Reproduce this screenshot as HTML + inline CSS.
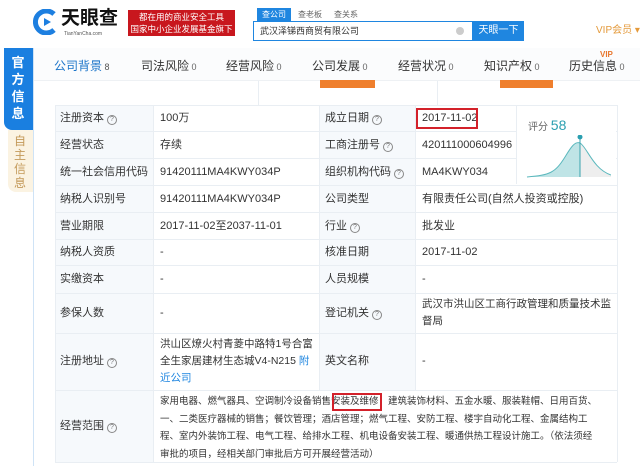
<!DOCTYPE html>
<html><head><meta charset="utf-8"><style>
*{margin:0;padding:0;box-sizing:border-box}
body{width:640px;height:466px;overflow:hidden;background:#fff;font-family:"Liberation Sans","Noto Sans CJK SC",sans-serif;position:relative;color:#333}
.a{position:absolute}
.t{font-size:11px;white-space:nowrap;line-height:14px}
.lab{background:#f6f9fc}
.hl{border-top:1px solid #e9eef3;position:absolute;left:55px;width:562px}
.vl{border-left:1px solid #e9eef3;position:absolute}
.q{display:inline-block;width:10px;height:10px;border:1px solid #888;border-radius:50%;font-size:7px;line-height:8px;text-align:center;color:#777;vertical-align:0px;margin-left:3px}
</style></head><body>
<!-- header -->
<svg class="a" style="left:33px;top:9px" width="26" height="26" viewBox="0 0 26 26"><path d="M21 5 A11 11 0 1 0 21 21" fill="none" stroke="#1d7fe0" stroke-width="5"/><path d="M11 9 l7 4 -7 4z" fill="#1d7fe0"/></svg>
<div class="a t" style="left:61px;top:8px;font-size:19px;line-height:22px;font-weight:bold;color:#111">天眼查</div>
<div class="a" style="left:64px;top:31px;font-size:5px;color:#555;white-space:nowrap">TianYanCha.com</div>
<div class="a" style="left:128px;top:10px;width:107px;height:26px;background:#c8171e;color:#fff;font-size:8.5px;line-height:12px;text-align:center;padding-top:1px;white-space:nowrap">都在用的商业安全工具<br>国家中小企业发展基金旗下</div>
<div class="a" style="left:257px;top:8px;width:34px;height:13px;background:#1f86e0;color:#fff;font-size:8px;line-height:13px;text-align:center">查公司</div>
<div class="a t" style="left:298px;top:8px;font-size:8px;color:#666">查老板</div>
<div class="a t" style="left:334px;top:8px;font-size:8px;color:#666">查关系</div>
<div class="a" style="left:253px;top:21px;width:220px;height:20px;border:1px solid #1f86e0;background:#fff"></div>
<div class="a t" style="left:260px;top:24px;font-size:9px;color:#333">武汉泽锑西商贸有限公司</div>
<div class="a" style="left:456px;top:27px;width:8px;height:8px;border-radius:50%;background:#ccc"></div>
<div class="a" style="left:473px;top:21px;width:51px;height:20px;background:#1f86e0;color:#fff;font-size:10px;line-height:20px;text-align:center">天眼一下</div>
<div class="a t" style="left:596px;top:24px;font-size:10px;color:#e49a3b">VIP会员 ▾</div>
<!-- sidebar -->
<div class="a" style="left:4px;top:48px;width:30px;height:82px;background:#1a7fe0;border-radius:0 0 0 8px"></div>
<div class="a" style="left:9px;top:54px;width:18px;color:#fff;font-size:13px;font-weight:bold;line-height:17px;text-align:center">官方信息</div>
<div class="a" style="left:8px;top:130px;width:26px;height:62px;background:#fbf3e2;border-radius:0 0 0 8px"></div>
<div class="a" style="left:11px;top:134px;width:18px;color:#c49a5a;font-size:12px;line-height:14px;text-align:center">自主信息</div>
<div class="a" style="left:33px;top:48px;width:1px;height:418px;background:#cfe3f6"></div>
<!-- nav -->
<div class="a" style="left:34px;top:48px;width:606px;height:33px;background:#fbfcfd;border-bottom:1px solid #eef1f4"></div>
<div class="a t" style="left:54px;top:59px;font-size:12px">
<span style="color:#1a74c9">公司背景</span><span style="font-size:9px;color:#555"> 8</span></div>
<div class="a t" style="left:141px;top:59px;font-size:12px">司法风险<span style="font-size:9px;color:#666"> 0</span></div>
<div class="a t" style="left:226px;top:59px;font-size:12px">经营风险<span style="font-size:9px;color:#666"> 0</span></div>
<div class="a t" style="left:312px;top:59px;font-size:12px">公司发展<span style="font-size:9px;color:#666"> 0</span></div>
<div class="a t" style="left:398px;top:59px;font-size:12px">经营状况<span style="font-size:9px;color:#666"> 0</span></div>
<div class="a t" style="left:484px;top:59px;font-size:12px">知识产权<span style="font-size:9px;color:#666"> 0</span></div>
<div class="a t" style="left:569px;top:59px;font-size:12px">历史信息<span style="font-size:9px;color:#666"> 0</span></div>
<div class="a t" style="left:600px;top:48px;font-size:8px;color:#e8772e;font-weight:bold">VIP</div>
<!-- top partial area -->
<div class="a" style="left:320px;top:80px;width:55px;height:8px;background:#ef7f2d"></div>
<div class="a" style="left:500px;top:80px;width:53px;height:8px;background:#ef7f2d"></div>
<div class="vl" style="left:258px;top:81px;height:24px"></div>
<div class="vl" style="left:437px;top:81px;height:24px"></div>
<!-- table -->
<div class="a lab" style="left:55px;top:105px;width:98px;height:357px"></div>
<div class="a lab" style="left:319px;top:105px;width:96px;height:285px"></div>
<div class="hl" style="top:105px"></div><div class="hl" style="top:131px"></div><div class="hl" style="top:158px"></div><div class="hl" style="top:185px"></div><div class="hl" style="top:212px"></div><div class="hl" style="top:239px"></div><div class="hl" style="top:265px"></div><div class="hl" style="top:293px"></div><div class="hl" style="top:333px"></div><div class="hl" style="top:390px"></div><div class="hl" style="top:462px"></div>
<div class="vl" style="left:55px;top:105px;height:357px"></div>
<div class="vl" style="left:153px;top:105px;height:357px"></div>
<div class="vl" style="left:319px;top:105px;height:285px"></div>
<div class="vl" style="left:415px;top:105px;height:285px"></div>
<div class="vl" style="left:617px;top:105px;height:357px"></div>
<div class="a" style="left:516px;top:106px;width:100px;height:78px;background:#fff;border-left:1px solid #e9eef3"></div>
<!-- rows -->
<div class="a t" style="left:60px;top:111px">注册资本<span class="q">?</span></div><div class="a t" style="left:160px;top:111px">100万</div><div class="a t" style="left:325px;top:111px">成立日期<span class="q">?</span></div>
<div class="a t" style="left:422px;top:111px">2017-11-02</div>
<div class="a" style="left:416px;top:108px;width:62px;height:21px;border:2px solid #d3212a"></div>
<div class="a t" style="left:60px;top:138px">经营状态</div><div class="a t" style="left:160px;top:138px">存续</div><div class="a t" style="left:325px;top:138px">工商注册号<span class="q">?</span></div><div class="a t" style="left:422px;top:138px">420111000604996</div>
<div class="a t" style="left:60px;top:165px">统一社会信用代码</div><div class="a t" style="left:160px;top:165px">91420111MA4KWY034P</div><div class="a t" style="left:325px;top:165px">组织机构代码<span class="q">?</span></div><div class="a t" style="left:422px;top:165px">MA4KWY034</div>
<div class="a t" style="left:60px;top:192px">纳税人识别号</div><div class="a t" style="left:160px;top:192px">91420111MA4KWY034P</div><div class="a t" style="left:325px;top:192px">公司类型</div><div class="a t" style="left:422px;top:192px">有限责任公司(自然人投资或控股)</div>
<div class="a t" style="left:60px;top:219px">营业期限</div><div class="a t" style="left:160px;top:219px">2017-11-02至2037-11-01</div><div class="a t" style="left:325px;top:219px">行业<span class="q">?</span></div><div class="a t" style="left:422px;top:219px">批发业</div>
<div class="a t" style="left:60px;top:245px">纳税人资质</div><div class="a t" style="left:160px;top:245px">-</div><div class="a t" style="left:325px;top:245px">核准日期</div><div class="a t" style="left:422px;top:245px">2017-11-02</div>
<div class="a t" style="left:60px;top:272px">实缴资本</div><div class="a t" style="left:160px;top:272px">-</div><div class="a t" style="left:325px;top:272px">人员规模</div><div class="a t" style="left:422px;top:272px">-</div>
<div class="a t" style="left:60px;top:306px">参保人数</div><div class="a t" style="left:160px;top:306px">-</div><div class="a t" style="left:325px;top:306px">登记机关<span class="q">?</span></div>
<div class="a" style="left:422px;top:296px;width:196px;font-size:10.5px;line-height:17px">武汉市洪山区工商行政管理和质量技术监督局</div>
<div class="a t" style="left:60px;top:354px">注册地址<span class="q">?</span></div>
<div class="a" style="left:160px;top:336px;width:159px;font-size:10.5px;line-height:17px">洪山区燎火村青菱中路特1号合富全生家居建材生态城V4-N215 <span style="color:#1f86e0">附近公司</span></div>
<div class="a t" style="left:325px;top:354px">英文名称</div><div class="a t" style="left:422px;top:354px">-</div>
<div class="a t" style="left:60px;top:419px">经营范围<span class="q">?</span></div>
<div class="a" style="left:160px;top:393px;width:440px;font-size:9.5px;line-height:17.5px">家用电器、燃气器具、空调制冷设备销售安装及维修；建筑装饰材料、五金水暖、服装鞋帽、日用百货、一、二类医疗器械的销售；餐饮管理；酒店管理；燃气工程、安防工程、楼宇自动化工程、金属结构工程、室内外装饰工程、电气工程、给排水工程、机电设备安装工程、暖通供热工程设计施工。（依法须经审批的项目，经相关部门审批后方可开展经营活动）</div>
<div class="a" style="left:332px;top:393px;width:50px;height:18px;border:2px solid #d3212a"></div>
<!-- rating -->
<div class="a t" style="left:528px;top:118px;font-size:10px;color:#666">评分 <span style="font-size:14px;color:#2a9fb0">58</span></div>
<svg class="a" style="left:525px;top:135px" width="86" height="45" viewBox="0 0 86 45"><path d="M2 42 C25 40 30 38 40 22 C46 12 50 6 55 8 C62 12 68 34 86 40 L86 42Z" fill="#eee"/><path d="M2 42 C25 40 30 38 40 22 C46 12 50 6 55 8 L55 42Z" fill="#bfe4e6"/><path d="M2 42 C25 40 30 38 40 22 C46 12 50 6 55 8 C62 12 68 34 86 40" fill="none" stroke="#5bb8bd" stroke-width="1"/><line x1="55" y1="0" x2="55" y2="42" stroke="#3aa3ad"/><circle cx="55" cy="2" r="2.5" fill="#2a9fb0"/></svg>
</body></html>
